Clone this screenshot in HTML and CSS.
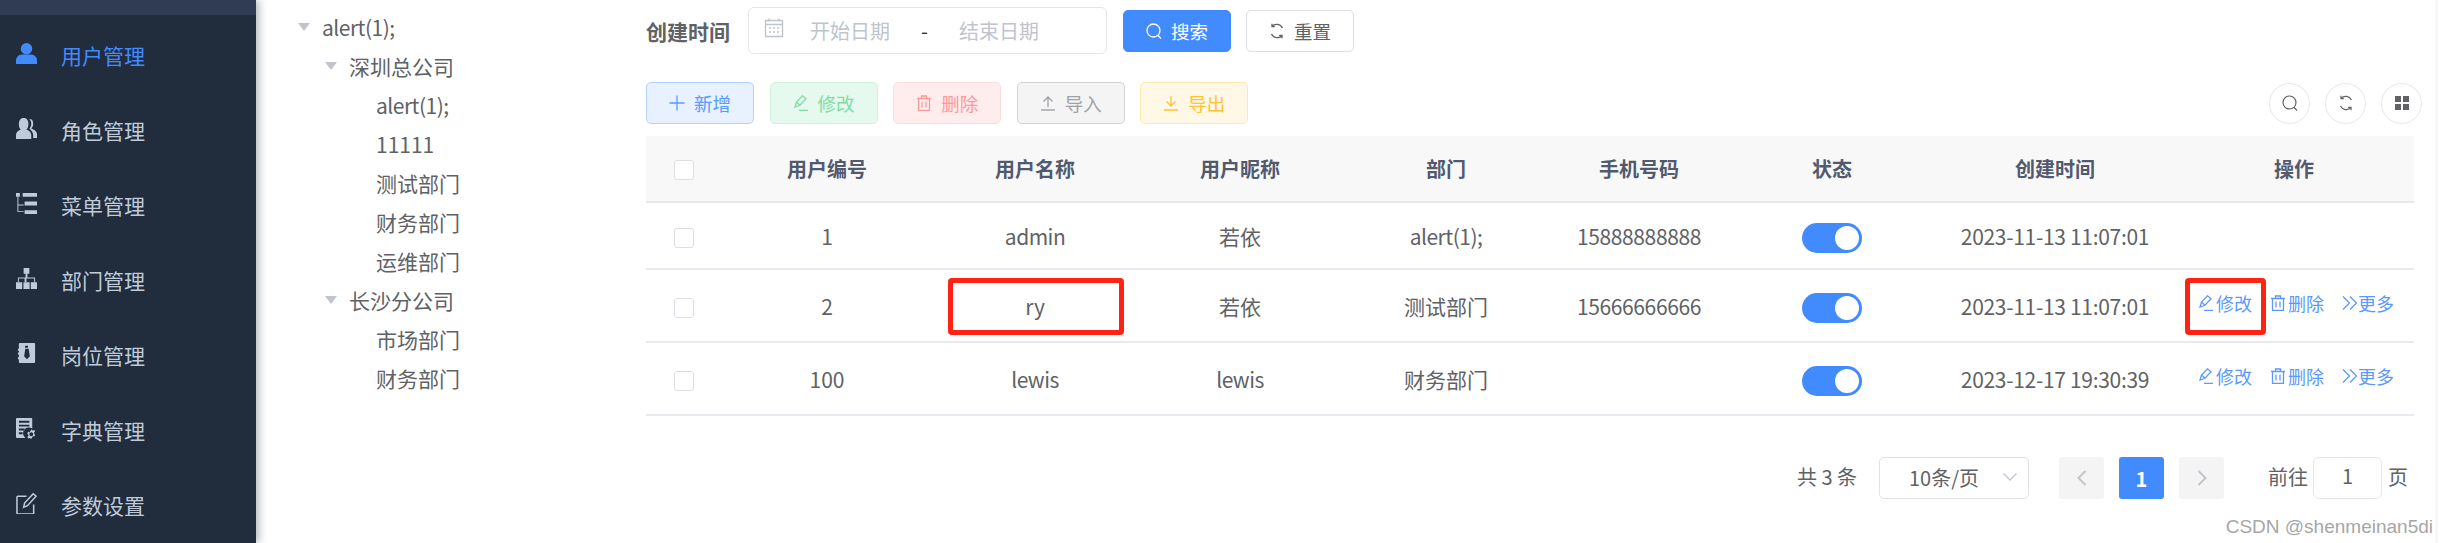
FILE: index.html
```html
<!DOCTYPE html>
<html lang="zh-CN">

<head>
    <meta charset="UTF-8">
    <title>用户管理</title>
    <link rel="stylesheet" href="styles.css">
</head>

<body>
    <div class="page">
        <aside class="sidebar">
            <div class="logo_strip"></div>
            <a class="menu_item active">
                <svg class="menu_icon" viewBox="0 0 22 22"><circle cx="11" cy="6" r="6"/><path d="M0 22v-4c0-3 3-6 6-6h10c3 0 6 3 6 6v4z"/></svg>
                <span>用户管理</span>
            </a>
            <a class="menu_item">
                <svg class="menu_icon" viewBox="0 0 22 22"><path d="M8 0c3 0 5 2 5 6s-1 5-2 6c3 1 5 3 5 6v4H0v-4c0-3 2-5 5-6-1-1-2-2-2-6s2-6 5-6z"/><path d="M14 1c3 0 4 2 4 5s-1 4-2 5c3 1 6 3 6 6v4h-4v-3c0-3-2-5-4-7 1-1 2-3 2-5 0-2-1-4-2-5z"/></svg>
                <span>角色管理</span>
            </a>
            <a class="menu_item">
                <svg class="menu_icon" viewBox="0 0 22 22"><path d="M0 0h4v4H0zM7 0h15v4H7zM9 9h13v4H9zM9 18h13v4H9z"/><path d="M1.500 4h1v8H8v1H2.500v6H8v1H1.500z"/></svg>
                <span>菜单管理</span>
            </a>
            <a class="menu_item">
                <svg class="menu_icon" viewBox="0 0 22 22"><path d="M8 0h6v6h-2v4h8v5h-1v-4h-8v4h-2v-4H3v4H2v-5h8V6H8z"/><path d="M0 15h6.500v7H0zM7.800 15h6.500v7H7.800zM15.500 15H22v7h-6.500z"/></svg>
                <span>部门管理</span>
            </a>
            <a class="menu_item">
                <svg class="menu_icon" viewBox="0 0 22 22"><path fill-rule="evenodd" d="M4 0h15a1 1 0 0 1 1 1v19a1 1 0 0 1-1 1H4a1 1 0 0 1-1-1v-3H2v-2h1v-3H2v-2h1V8H2V6h1V1a1 1 0 0 1 1-1zm5.500 3v2h3V3zm.3 3l-1.300 8 3 3 3-3-1.300-8z"/></svg>
                <span>岗位管理</span>
            </a>
            <a class="menu_item">
                <svg class="menu_icon" viewBox="0 0 22 22"><path fill-rule="evenodd" d="M1 0h15a1 1 0 0 1 1 1v10a6 6 0 0 0-7 10H1a1 1 0 0 1-1-1V1a1 1 0 0 1 1-1zm2 3v2h11V3zm0 4v2h11V7zm0 4v2h6v-2zm0 4v2h4v-2z"/><path fill-rule="evenodd" d="M16 12l1.500 1 1.500-.5 1 1.700-1 1 .1 1.600 1 1-1 1.700-1.500-.5L16 22l-1.600-1-1.500.5-1-1.700 1-1-.1-1.600-1-1 1-1.700 1.500.5zm0 3a2 2 0 1 0 0 4 2 2 0 0 0 0-4z"/></svg>
                <span>字典管理</span>
            </a>
            <a class="menu_item">
                <svg class="menu_icon" viewBox="0 0 22 22"><path class="menu_line" d="M11 3.500H2a1 1 0 0 0-1 1V21a1 1 0 0 0 1 1h15.500a1 1 0 0 0 1-1v-9"/><path class="menu_line" d="M8 15l1-4.500L18 .8l3 2.500-9 10z"/></svg>
                <span>参数设置</span>
            </a>
        </aside>

        <nav class="tree">
            <div class="tree_row level_1"><i class="caret"></i><span class="latin">alert(1);</span></div>
            <div class="tree_row level_2"><i class="caret"></i>深圳总公司</div>
            <div class="tree_row level_3"><i class="caret leaf"></i><span class="latin">alert(1);</span></div>
            <div class="tree_row level_3"><i class="caret leaf"></i>11111</div>
            <div class="tree_row level_3"><i class="caret leaf"></i>测试部门</div>
            <div class="tree_row level_3"><i class="caret leaf"></i>财务部门</div>
            <div class="tree_row level_3"><i class="caret leaf"></i>运维部门</div>
            <div class="tree_row level_2"><i class="caret"></i>长沙分公司</div>
            <div class="tree_row level_3"><i class="caret leaf"></i>市场部门</div>
            <div class="tree_row level_3"><i class="caret leaf"></i>财务部门</div>
        </nav>

        <main class="content">
            <form class="search_form">
                <label class="form_label">创建时间</label>
                <div class="date_range">
                    <svg class="date_icon" viewBox="0 0 20 20"><path d="M1.500 2.500h17v16h-17zM1.500 6.500h17"/><path d="M5 0.500v3M15 0.500v3M5 10h2M9 10h2M13 10h2M5 14h2M9 14h2M13 14h2"/></svg>
                    <span class="date_start">开始日期</span>
                    <span class="date_sep">-</span>
                    <span class="date_end">结束日期</span>
                </div>
                <button type="button" class="btn btn_primary">
                    <svg class="btn_icon" viewBox="0 0 16 16"><circle cx="7.500" cy="7.500" r="6.500"/><path d="M12 12.500l3 3"/></svg>搜索
                </button>
                <button type="button" class="btn btn_plain">
                    <svg class="btn_icon" viewBox="0 0 16 16"><path d="M13.500 5A6.500 6.500 0 0 0 3 3.300M2.500 11A6.500 6.500 0 0 0 13 12.700"/><path d="M3 .8v2.800h2.800M13 15.200v-2.800h-2.800"/></svg>重置
                </button>
            </form>

            <div class="toolbar">
                <button type="button" class="btn btn_add">
                    <svg class="btn_icon" viewBox="0 0 16 16"><path d="M8 .5v15M.5 8h15"/></svg>新增
                </button>
                <button type="button" class="btn btn_edit">
                    <svg class="btn_icon" viewBox="0 0 16 16"><path d="M2 12l1.500-5L9.500 .8l3.500 3-6 6.500zM3.500 7l3.500 3.200M6 15.500h9"/></svg>修改
                </button>
                <button type="button" class="btn btn_del">
                    <svg class="btn_icon" viewBox="0 0 16 16"><path d="M1 3.500h14M5.500 3.500V1h5v2.500M2.500 3.500v12h11v-12M6 6.500v6M10 6.500v6"/></svg>删除
                </button>
                <button type="button" class="btn btn_import">
                    <svg class="btn_icon" viewBox="0 0 16 16"><path d="M8 12V2M3.500 6.500L8 2l4.500 4.500M1 15h14"/></svg>导入
                </button>
                <button type="button" class="btn btn_export">
                    <svg class="btn_icon" viewBox="0 0 16 16"><path d="M8 1v10M3.500 6.500L8 11l4.500-4.500M1 15h14"/></svg>导出
                </button>
                <div class="tools">
                    <span class="tool_btn"><svg viewBox="0 0 16 16"><circle cx="7.500" cy="7.500" r="6.500"/><path d="M12 12.500l3 3"/></svg></span>
                    <span class="tool_btn"><svg viewBox="0 0 16 16"><path d="M13.500 5A6.500 6.500 0 0 0 3 3.300M2.500 11A6.500 6.500 0 0 0 13 12.700"/><path d="M3 .8v2.800h2.800M13 15.200v-2.800h-2.800"/></svg></span>
                    <span class="tool_btn"><svg class="tool_fill" viewBox="0 0 16 16"><path d="M1 1h6v6H1zM9 1h6v6H9zM1 9h6v6H1zM9 9h6v6H9z"/></svg></span>
                </div>
            </div>

            <table class="user_table">
                <colgroup>
                    <col class="col_check">
                    <col class="col_id">
                    <col class="col_name">
                    <col class="col_nick">
                    <col class="col_dept">
                    <col class="col_phone">
                    <col class="col_status">
                    <col class="col_time">
                    <col class="col_ops">
                </colgroup>
                <thead>
                    <tr>
                        <th><span class="checkbox"></span></th>
                        <th>用户编号</th>
                        <th>用户名称</th>
                        <th>用户昵称</th>
                        <th>部门</th>
                        <th>手机号码</th>
                        <th>状态</th>
                        <th>创建时间</th>
                        <th>操作</th>
                    </tr>
                </thead>
                <tbody>
                    <tr class="row_first">
                        <td><span class="checkbox"></span></td>
                        <td>1</td>
                        <td class="latin">admin</td>
                        <td>若依</td>
                        <td class="latin">alert(1);</td>
                        <td class="phone">15888888888</td>
                        <td><span class="switch"></span></td>
                        <td class="time">2023-11-13 11:07:01</td>
                        <td></td>
                    </tr>
                    <tr>
                        <td><span class="checkbox"></span></td>
                        <td>2</td>
                        <td>ry</td>
                        <td>若依</td>
                        <td>测试部门</td>
                        <td class="phone">15666666666</td>
                        <td><span class="switch"></span></td>
                        <td class="time">2023-11-13 11:07:01</td>
                        <td>
                            <div class="ops">
                                <a><svg viewBox="0 0 16 16"><path d="M2 12l1.500-5L9.500 .8l3.500 3-6 6.500zM3.500 7l3.500 3.200M6 15.500h9"/></svg>修改</a>
                                <a><svg viewBox="0 0 16 16"><path d="M1 3.500h14M5.500 3.500V1h5v2.500M2.500 3.500v12h11v-12M6 6.500v6M10 6.500v6"/></svg>删除</a>
                                <a><svg viewBox="0 0 16 16"><path d="M1 1.500L7.500 8 1 14.500M8 1.500L14.500 8 8 14.500"/></svg>更多</a>
                            </div>
                        </td>
                    </tr>
                    <tr>
                        <td><span class="checkbox"></span></td>
                        <td>100</td>
                        <td class="latin">lewis</td>
                        <td class="latin">lewis</td>
                        <td>财务部门</td>
                        <td></td>
                        <td><span class="switch"></span></td>
                        <td class="time">2023-12-17 19:30:39</td>
                        <td>
                            <div class="ops">
                                <a><svg viewBox="0 0 16 16"><path d="M2 12l1.500-5L9.500 .8l3.500 3-6 6.500zM3.500 7l3.500 3.200M6 15.500h9"/></svg>修改</a>
                                <a><svg viewBox="0 0 16 16"><path d="M1 3.500h14M5.500 3.500V1h5v2.500M2.500 3.500v12h11v-12M6 6.500v6M10 6.500v6"/></svg>删除</a>
                                <a><svg viewBox="0 0 16 16"><path d="M1 1.500L7.500 8 1 14.500M8 1.500L14.500 8 8 14.500"/></svg>更多</a>
                            </div>
                        </td>
                    </tr>
                </tbody>
            </table>

            <div class="pagination">
                <span class="total">共 3 条</span>
                <div class="size_select">
                    <span>10条/页</span>
                    <svg viewBox="0 0 14 8"><path d="M.5 .5L7 7l6.500-6.500"/></svg>
                </div>
                <span class="page_btn prev"><svg viewBox="0 0 10 16"><path d="M8.500 1L1.500 8l7 7"/></svg></span>
                <span class="page_btn current">1</span>
                <span class="page_btn next"><svg viewBox="0 0 10 16"><path d="M1.500 1l7 7-7 7"/></svg></span>
                <span class="jump_label">前往</span>
                <span class="jump_input">1</span>
                <span class="jump_unit">页</span>
            </div>
        </main>

        <div class="scroll_strip"></div>

        <!-- красные рамки поверх таблицы -->
        <div class="mark mark_name"></div>
        <div class="mark mark_edit"></div>
        <div class="watermark">CSDN @shenmeinan5di</div>
    </div>
</body>

</html>
```

FILE: styles.css
```css
* {
    box-sizing: border-box;
}

html,
body {
    margin: 0;
    height: 100%;
    background: #fff;
}

body {
    font-family: "Noto Sans CJK SC", sans-serif;
    color: #606266;
    overflow: hidden;
}

.page {
    position: relative;
    display: flex;
    width: 2448px;
    height: 543px;
    overflow: hidden;
}

/* sidebar */
.sidebar {
    flex: none;
    width: 256px;
    background: #212c3d;
    box-shadow: 3px 0 8px rgba(0, 21, 41, .3);
    z-index: 2;
}

.logo_strip {
    height: 15px;
    margin-bottom: 4px;
    background: #2f3c53;
}

.menu_item {
    display: flex;
    align-items: center;
    height: 75px;
    padding-left: 16px;
    font-size: 21px;
    color: #bfcbd9;
}

.menu_item span {
    margin-bottom: 3px;
}

.menu_item.active {
    color: #428bff;
}

.menu_icon {
    flex: none;
    width: 21px;
    height: 21px;
    margin-right: 24px;
    margin-top: -7px;
    fill: #bfcbd9;
}

.active .menu_icon {
    fill: #428bff;
}

.menu_line {
    fill: none;
    stroke: #bfcbd9;
    stroke-width: 1.6;
}

/* tree */
.tree {
    flex: none;
    width: 390px;
    padding-top: 7px;
    font-size: 21px;
}

.tree_row {
    display: flex;
    align-items: center;
    height: 39px;
}

.level_1 {
    padding-left: 42px;
}

.level_2 {
    padding-left: 69px;
}

.level_3 {
    padding-left: 96px;
}

.caret {
    flex: none;
    width: 0;
    height: 0;
    margin-right: 12px;
    border-left: 6px solid transparent;
    border-right: 6px solid transparent;
    border-top: 8px solid #c0c4cc;
}

.caret.leaf {
    border-top-color: transparent;
}

.latin {
    letter-spacing: -.5px;
}

/* content */
.content {
    flex: none;
    width: 1768px;
    padding-top: 7px;
}

.search_form {
    display: flex;
    align-items: center;
    height: 47px;
    margin-bottom: 28px;
}

.form_label {
    width: 102px;
    font-size: 21px;
    font-weight: 700;
}

.date_range {
    display: flex;
    align-items: center;
    width: 359px;
    height: 47px;
    margin-right: 16px;
    padding-left: 15px;
    border: 1.500px solid #e4e7ed;
    border-radius: 6px;
    font-size: 20px;
    color: #c0c4cc;
}

.date_icon {
    width: 20px;
    height: 20px;
    margin-top: -6px;
    fill: none;
    stroke: #c0c4cc;
    stroke-width: 1.4;
}

.date_start {
    margin-left: 26px;
}

.date_sep {
    margin-left: 31px;
    color: #303133;
}

.date_end {
    margin-left: 31px;
}

.btn {
    display: flex;
    align-items: center;
    justify-content: center;
    width: 108px;
    height: 42px;
    padding: 0;
    border: 1.500px solid #dcdfe6;
    border-radius: 5px;
    background: #fff;
    font: inherit;
    font-size: 18.500px;
    color: #606266;
}

.search_form .btn + .btn {
    margin-left: 15px;
}

.btn_icon {
    width: 16px;
    height: 16px;
    margin-right: 9px;
    fill: none;
    stroke: currentColor;
    stroke-width: 1.300;
}

.btn_primary {
    background: #428bff;
    border-color: #428bff;
    color: #fff;
}

.toolbar {
    display: flex;
    align-items: center;
    gap: 15.600px;
    height: 42px;
    margin-bottom: 12px;
}

.btn_add {
    background: #e8f2ff;
    border-color: #b3d2ff;
    color: #5b99ff;
}

.btn_edit {
    background: #e6f9ee;
    border-color: #d0f3df;
    color: #7fdca3;
}

.btn_del {
    background: #ffeded;
    border-color: #ffdcdc;
    color: #ff9999;
}

.btn_import {
    background: #f4f4f5;
    border-color: #d3d4d6;
    color: #a0a2a8;
}

.btn_export {
    background: #fff8e6;
    border-color: #ffe8a8;
    color: #ffc233;
}

.tools {
    display: flex;
    gap: 15px;
    margin-left: auto;
    margin-right: -8px;
}

.tool_btn {
    display: flex;
    align-items: center;
    justify-content: center;
    width: 41px;
    height: 41px;
    border: 1.500px solid #e4e7ed;
    border-radius: 50%;
}

.tool_btn svg {
    width: 16px;
    height: 16px;
    fill: none;
    stroke: #606266;
    stroke-width: 1.200;
}

.tool_btn svg.tool_fill {
    fill: #606266;
    stroke: none;
}

/* table */
.user_table {
    width: 1768px;
    table-layout: fixed;
    border-collapse: collapse;
    text-align: center;
}

.col_check { width: 76px; }
.col_id { width: 210px; }
.col_name { width: 206px; }
.col_nick { width: 204px; }
.col_dept { width: 208px; }
.col_phone { width: 178px; }
.col_status { width: 208px; }
.col_time { width: 238px; }
.col_ops { width: 240px; }

.user_table th {
    height: 66px;
    padding: 0;
    background: #f8f8f9;
    border-bottom: 2px solid #e6e8ee;
    font-size: 20px;
    font-weight: 700;
    color: #515a6e;
}

.user_table td {
    height: 73px;
    padding: 1px 0 0;
    border-bottom: 2px solid #e8eaf0;
    font-size: 21px;
}

.user_table .row_first td {
    height: 67px;
}

.checkbox {
    display: block;
    width: 20px;
    height: 20px;
    margin: 3px auto 0;
    background: #fff;
    border: 1.500px solid #dcdfe6;
    border-radius: 3px;
}

.phone {
    letter-spacing: -.4px;
}

.time {
    letter-spacing: -.3px;
}

.switch {
    display: inline-block;
    position: relative;
    width: 60px;
    height: 30px;
    margin-top: 3px;
    vertical-align: middle;
    background: #428bff;
    border-radius: 15px;
}

.switch::after {
    content: "";
    position: absolute;
    top: 3px;
    right: 3px;
    width: 24px;
    height: 24px;
    background: #fff;
    border-radius: 50%;
}

.ops {
    display: flex;
    gap: 18px;
    margin-bottom: 6px;
    padding-left: 24px;
    font-size: 18px;
    color: #5b99ff;
}

.ops a {
    display: flex;
    align-items: center;
}

.ops svg {
    width: 16px;
    height: 16px;
    margin-right: 2px;
    fill: none;
    stroke: currentColor;
    stroke-width: 1.300;
}

.ops a:last-child svg {
    margin-right: 0;
}

/* pagination */
.pagination {
    display: flex;
    align-items: center;
    justify-content: flex-end;
    height: 42px;
    margin-top: 41px;
    padding-right: 6px;
    font-size: 20px;
}

.total,
.jump_label,
.jump_unit {
    padding-bottom: 3px;
}

.size_select {
    display: flex;
    align-items: center;
    justify-content: space-between;
    width: 150px;
    height: 42px;
    margin-left: 22px;
    margin-right: 30px;
    padding: 0 11px 2px 29px;
    border: 1.500px solid #e0e2ea;
    border-radius: 5px;
}

.size_select svg {
    width: 14px;
    height: 8px;
    fill: none;
    stroke: #c0c4cc;
    stroke-width: 1.300;
}

.page_btn {
    display: flex;
    align-items: center;
    justify-content: center;
    width: 45px;
    height: 42px;
    border-radius: 3px;
    background: #f4f4f5;
}

.page_btn svg {
    width: 10px;
    height: 16px;
    fill: none;
    stroke: #c0c4cc;
    stroke-width: 2;
}

.page_btn.current {
    margin: 0 15px;
    background: #428bff;
    color: #fff;
    font-weight: 700;
}

.jump_label {
    margin-left: 44px;
}

.jump_input {
    width: 69px;
    height: 42px;
    margin: 0 6px 0 5px;
    line-height: 36px;
    text-align: center;
    border: 1.500px solid #e4e7ed;
    border-radius: 6px;
}

/* правая полоса */
.scroll_strip {
    flex: none;
    width: 3px;
    margin-left: 21px;
    background: #f8f8f8;
}

/* annotations */
.mark {
    position: absolute;
    top: 278px;
    height: 57px;
    border: 5px solid #ff2314;
    border-radius: 4px;
}

.mark_name {
    left: 948px;
    width: 176px;
}

.mark_edit {
    left: 2185px;
    width: 81px;
}

.watermark {
    position: absolute;
    top: 514px;
    right: 15px;
    font-family: "Liberation Sans", sans-serif;
    font-size: 19px;
    line-height: 26px;
    color: #a6a6a6;
}
```
